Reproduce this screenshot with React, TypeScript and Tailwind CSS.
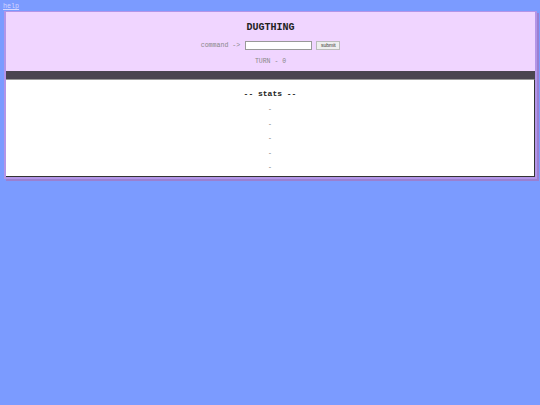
import React from 'react'

const mono = { fontFamily: '"Liberation Mono", "Courier New", monospace' }

const Stat = ({ text }: { text: string }) => (
  <div className="h-[14.6px] leading-[14.6px] text-[6.5px] text-[#777]">{text}</div>
)

export default function App() {
  return (
    <div className="min-h-[405px] w-[540px] bg-[#7b9bff]" style={mono}>
      <div className="h-[11px] pl-[3px] pt-[1px] text-[6.7px] leading-[10px]">
        <a href="#" className="text-[#d6d6ff] underline">help</a>
      </div>
      <div className="ml-[4px] w-[533px] border-2 border-t border-[#b395e8] shadow-[2px_2px_0_#9b7fd0]">
        <div className="flex h-[59px] flex-col items-center bg-[#f0d5ff]">
          <div className="mt-[10px] text-[10px] font-bold leading-[12px] text-[#222]">DUGTHING</div>
          <div className="mt-[7px] flex items-center">
            <span className="text-[6.6px] text-[#888]">command -&gt;</span>
            <input
              className="ml-[5px] h-[9px] w-[67px] border border-[#999] bg-white"
              type="text"
            />
            <button
              className="ml-[4px] flex h-[9px] w-[24px] items-center justify-center border border-[#bbb] bg-[#eee] text-[5px] text-[#333]"
              style={{ fontFamily: '"Liberation Sans", Arial, sans-serif' }}
            >
              submit
            </button>
          </div>
          <div className="mt-[6px] text-[6.5px] leading-[10px] text-[#888]">TURN - 0</div>
        </div>
        <div className="h-[8px] bg-[#4a4550]" />
        <div className="flex h-[98px] flex-col items-center border-t border-r border-b border-t-[#999] border-r-[#333] border-b-[#333] bg-white">
          <div className="mt-[8px] mb-[3px] text-[8px] font-bold leading-[12px] text-[#222]">-- stats --</div>
          <Stat text="-" />
          <Stat text="-" />
          <Stat text="-" />
          <Stat text="-" />
          <Stat text="-" />
        </div>
      </div>
    </div>
  )
}
